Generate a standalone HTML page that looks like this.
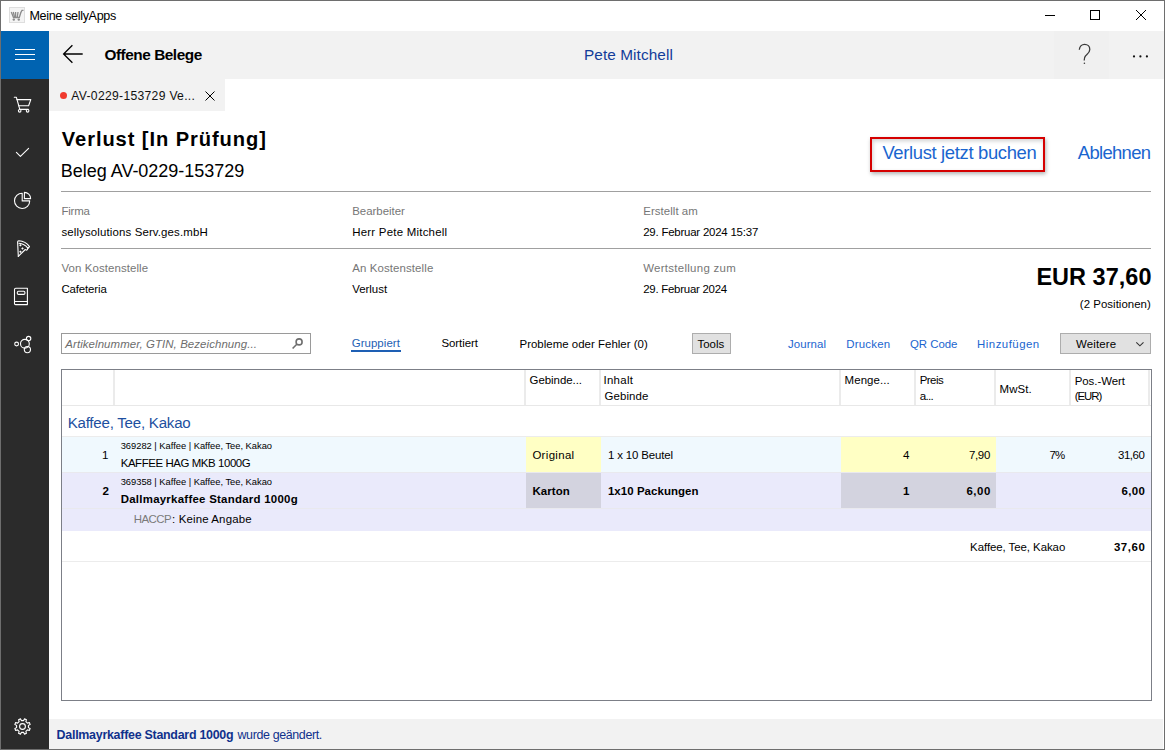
<!DOCTYPE html>
<html><head><meta charset="utf-8">
<style>
html,body{margin:0;padding:0;width:1165px;height:750px;overflow:hidden;background:#fff;}
body{position:relative;font-family:"Liberation Sans",sans-serif;color:#000;}
.t{position:absolute;line-height:1;white-space:nowrap;}
.r{position:absolute;}
svg{position:absolute;overflow:visible;}
</style></head><body>
<!-- window border -->
<div class="r" style="left:0;top:0;width:1165px;height:750px;box-sizing:border-box;border:1px solid #6e6e6e;"></div>
<!-- sidebar -->
<div class="r" style="left:1px;top:31px;width:48px;height:718px;background:#2b2b2b;"></div>
<div class="r" style="left:1px;top:31px;width:48px;height:48px;background:#0063b1;"></div>
<!-- header -->
<div class="r" style="left:49px;top:31px;width:1115px;height:48px;background:#f2f2f2;"></div>
<div class="r" style="left:1054px;top:31px;width:55px;height:48px;background:#f0f0f0;"></div>
<!-- tab -->
<div class="r" style="left:49px;top:79px;width:176px;height:32px;background:#f2f2f2;"></div>
<div class="r" style="left:60px;top:92px;width:7px;height:7px;border-radius:50%;background:#f03a2e;"></div>
<!-- status bar -->
<div class="r" style="left:49px;top:719px;width:1114px;height:30px;background:#f2f2f2;"></div>
<!-- hr -->
<div class="r" style="left:61px;top:191px;width:1090px;height:1px;background:#a0a0a0;"></div>
<div class="r" style="left:61px;top:248px;width:1090px;height:1px;background:#a0a0a0;"></div>
<!-- red box -->
<div class="r" style="left:870px;top:137px;width:175px;height:35px;box-sizing:border-box;border:2px solid #d50000;box-shadow:1px 2px 4px rgba(0,0,0,0.3), inset 1px 2px 4px rgba(0,0,0,0.18);"></div>
<!-- search box -->
<div class="r" style="left:61px;top:333px;width:250px;height:21px;box-sizing:border-box;border:1px solid #9a9a9a;"></div>
<!-- gruppiert underline -->
<div class="r" style="left:351px;top:350px;width:50px;height:2px;background:#1e5fb4;"></div>
<!-- Tools button -->
<div class="r" style="left:692px;top:333px;width:39px;height:21px;box-sizing:border-box;border:1px solid #adadad;background:#e1e1e1;"></div>
<!-- Weitere button -->
<div class="r" style="left:1060px;top:333px;width:91px;height:21px;box-sizing:border-box;border:1px solid #adadad;background:#e1e1e1;"></div>
<!-- table -->
<div class="r" style="left:61px;top:369px;width:1091px;height:332px;box-sizing:border-box;border:1px solid #7c7f87;"></div>
<!-- header seps -->
<div class="r" style="left:62px;top:405px;width:1089px;height:1px;background:#e8e8e8;"></div>
<div class="r" style="left:113px;top:370px;width:2px;height:35px;background:#ebebeb;"></div>
<div class="r" style="left:524px;top:370px;width:2px;height:35px;background:#ebebeb;"></div>
<div class="r" style="left:599px;top:370px;width:2px;height:35px;background:#ebebeb;"></div>
<div class="r" style="left:839px;top:370px;width:2px;height:35px;background:#ebebeb;"></div>
<div class="r" style="left:914px;top:370px;width:2px;height:35px;background:#ebebeb;"></div>
<div class="r" style="left:994px;top:370px;width:2px;height:35px;background:#ebebeb;"></div>
<div class="r" style="left:1069px;top:370px;width:2px;height:35px;background:#ebebeb;"></div>
<div class="r" style="left:1148px;top:370px;width:2px;height:35px;background:#ebebeb;"></div>
<!-- group row line -->
<div class="r" style="left:62px;top:436px;width:1089px;height:1px;background:#ececec;"></div>
<!-- row1 -->
<div class="r" style="left:62px;top:437px;width:1089px;height:35px;background:#f0f9fe;"></div>
<div class="r" style="left:526px;top:437px;width:75px;height:35px;background:#ffffc4;"></div>
<div class="r" style="left:841px;top:437px;width:155px;height:35px;background:#ffffc4;"></div>
<!-- row2 -->
<div class="r" style="left:62px;top:472px;width:1089px;height:59px;background:#eaeafb;"></div>
<div class="r" style="left:526px;top:472px;width:75px;height:36px;background:#d3d3df;"></div>
<div class="r" style="left:841px;top:472px;width:155px;height:36px;background:#d3d3df;"></div>
<div class="r" style="left:62px;top:472px;width:1089px;height:1px;background:#e9e9ee;"></div>
<div class="r" style="left:62px;top:508px;width:1089px;height:1px;background:#e9e9ee;"></div>
<!-- summary line -->
<div class="r" style="left:62px;top:561px;width:1089px;height:1px;background:#ececec;"></div>
<svg width="1165" height="750" viewBox="0 0 1165 750" style="left:0;top:0">
<!-- app icon -->
<rect x="9.5" y="7.5" width="15" height="15" fill="#f4f4f4" stroke="#dedede" stroke-width="1"/>
<g fill="none" stroke="#8a8a8a" stroke-width="1.3">
<path d="M11.3 12 L13.5 17.5 H19.3 L21 12"/>
<path d="M13.3 12 L14.5 17 M15.6 12 V17 M18 12 L17.3 17"/>
<path d="M21 12.3 L22 10.3 H23.5"/>
</g>
<g fill="#8a8a8a"><circle cx="13.8" cy="19.6" r="1.2"/><circle cx="18.8" cy="19.6" r="1.2"/></g>
<!-- window controls -->
<g stroke="#000" stroke-width="1" fill="none" shape-rendering="crispEdges">
<path d="M1045 15.5 H1055"/>
<rect x="1090.5" y="10.5" width="9" height="9"/>
</g>
<g stroke="#000" stroke-width="1" fill="none">
<path d="M1136 10 L1146 20 M1146 10 L1136 20"/>
</g>
<!-- hamburger -->
<g stroke="#fff" stroke-width="1.2" shape-rendering="crispEdges">
<path d="M15 49.5 H35 M15 54.5 H35 M15 59.5 H35"/>
</g>
<!-- back arrow -->
<g stroke="#000" stroke-width="1.3" fill="none">
<path d="M72.4 45.2 L63.6 54 L72.4 62.8 M63.8 54 H82.7"/>
</g>
<!-- tab close -->
<g stroke="#000" stroke-width="1" fill="none">
<path d="M205.5 91.5 L214.5 100.5 M214.5 91.5 L205.5 100.5"/>
</g>
<!-- help -->
<g stroke="#3a3a3a" stroke-width="1.3" fill="none">
<path d="M1079.3 49.8 C1079.6 46.4 1082 44.3 1084.6 44.3 C1087.6 44.3 1089.8 46.5 1089.8 49.4 C1089.8 52.7 1087.1 54.2 1085.6 55.8 C1084.4 57 1084.2 58.3 1084.2 60.6"/>
</g>
<circle cx="1084.4" cy="63.3" r="0.8" fill="#3a3a3a"/>
<g fill="#111"><circle cx="1134" cy="56.4" r="1.1"/><circle cx="1140.4" cy="56.4" r="1.1"/><circle cx="1146.9" cy="56.4" r="1.1"/></g>
<!-- sidebar icons -->
<g stroke="#ffffff" stroke-width="1.1" fill="none" stroke-linejoin="round" stroke-linecap="round">
<!-- cart -->
<path d="M14.3 97.3 H16.4 L19.8 109.4 H28.3"/>
<path d="M16.9 99.6 H30.8 L28.6 105.8 H18.6"/>
<circle cx="19.7" cy="110.8" r="1.3"/>
<circle cx="27.6" cy="110.8" r="1.3"/>
<!-- check -->
<path d="M16.4 152.4 L20.4 156.3 L28.6 148.3"/>
<!-- pie -->
<path d="M22.2 193.3 A7.6 7.6 0 1 0 29.7 200.9 H22.2 Z"/>
<path d="M24.4 192.4 V198.6 H30.6 A6.2 6.2 0 0 0 24.4 192.4 Z"/>
<!-- pizza -->
<path d="M18.3 256.3 L17.6 242 Q17.6 240.7 18.8 240.7 Q25.5 241 29.5 246.6 L28 248.3 Q24.3 243.7 19 243.3"/>
<path d="M18.3 256.3 L25.3 249.5 Q26.4 250.7 27.3 249.6 L27.8 248.4"/>
<!-- book -->
<path d="M15.8 288.3 H27.4 V304.6 H15.6 Q14.5 304.6 14.5 303.5 V289.6 Q14.5 288.3 15.8 288.3 Z"/>
<path d="M14.6 301.5 H27.4"/>
<rect x="17.3" y="291.3" width="7.6" height="3.1" rx="1.2"/>
<!-- share graph -->
<circle cx="16.6" cy="344" r="1.9"/>
<circle cx="24.9" cy="343.8" r="4.4"/>
<circle cx="28.6" cy="338.6" r="2.2"/>
<circle cx="27.4" cy="349.6" r="3.1"/>
<!-- gear -->
<path d="M23.61 720.60 L24.54 718.87 L26.46 719.66 L25.88 721.54 L27.46 723.12 L29.34 722.54 L30.13 724.46 L28.40 725.39 L28.40 727.61 L30.13 728.54 L29.34 730.46 L27.46 729.88 L25.88 731.46 L26.46 733.34 L24.54 734.13 L23.61 732.40 L21.39 732.40 L20.46 734.13 L18.54 733.34 L19.12 731.46 L17.54 729.88 L15.66 730.46 L14.87 728.54 L16.60 727.61 L16.60 725.39 L14.87 724.46 L15.66 722.54 L17.54 723.12 L19.12 721.54 L18.54 719.66 L20.46 718.87 L21.39 720.60 Z"/>
<circle cx="22.5" cy="726.5" r="2.9"/>
</g>
<g fill="#ffffff">
<rect x="19.5" y="244.4" width="1.8" height="1.8" transform="rotate(45 20.4 245.3)"/>
<rect x="21.6" y="247.5" width="1.8" height="1.8" transform="rotate(45 22.5 248.4)"/>
<rect x="19.5" y="250.8" width="1.8" height="1.8" transform="rotate(45 20.4 251.7)"/>
</g>
<!-- search icon -->
<g stroke="#6e6e6e" stroke-width="1.6" fill="none">
<circle cx="299.1" cy="341.9" r="3.0"/>
<path d="M296.8 344.3 L292.6 348.5"/>
</g>
<!-- chevron -->
<path d="M1136.3 342.3 L1139.9 345.8 L1143.5 342.3" stroke="#333" stroke-width="1.1" fill="none"/>
</svg>
<span class="t" style="top:10px;font-size:12.57px;letter-spacing:-0.328px;left:29.40px;">Meine sellyApps</span>
<span class="t" style="top:47px;font-size:15.36px;font-weight:bold;letter-spacing:-0.453px;left:104.40px;">Offene Belege</span>
<span class="t" style="top:47px;font-size:15.36px;color:#133c9a;letter-spacing:0.074px;left:584.00px;">Pete Mitchell</span>
<span class="t" style="top:90px;font-size:12.15px;color:#111;letter-spacing:0.299px;left:71.30px;">AV-0229-153729 Ve...</span>
<span class="t" style="top:129px;font-size:20.11px;font-weight:bold;letter-spacing:0.922px;left:61.80px;">Verlust [In Prüfung]</span>
<span class="t" style="top:162px;font-size:18.02px;letter-spacing:-0.024px;left:60.80px;">Beleg AV-0229-153729</span>
<span class="t" style="top:144px;font-size:18.44px;color:#1a65cf;letter-spacing:-0.345px;left:882.40px;">Verlust jetzt buchen</span>
<span class="t" style="top:144px;font-size:18.44px;color:#1a65cf;letter-spacing:-0.666px;left:1077.80px;">Ablehnen</span>
<span class="t" style="top:206px;font-size:11.45px;color:#767676;letter-spacing:-0.216px;left:61.50px;">Firma</span>
<span class="t" style="top:227px;font-size:11.45px;letter-spacing:0.129px;left:61.50px;">sellysolutions Serv.ges.mbH</span>
<span class="t" style="top:263px;font-size:11.45px;color:#767676;letter-spacing:0.09px;left:61.50px;">Von Kostenstelle</span>
<span class="t" style="top:284px;font-size:11.45px;letter-spacing:-0.144px;left:61.50px;">Cafeteria</span>
<span class="t" style="top:206px;font-size:11.45px;color:#767676;letter-spacing:-0.007px;left:352.20px;">Bearbeiter</span>
<span class="t" style="top:227px;font-size:11.45px;letter-spacing:0.238px;left:352.20px;">Herr Pete Mitchell</span>
<span class="t" style="top:263px;font-size:11.45px;color:#767676;letter-spacing:0.113px;left:352.20px;">An Kostenstelle</span>
<span class="t" style="top:284px;font-size:11.45px;letter-spacing:-0.015px;left:352.20px;">Verlust</span>
<span class="t" style="top:206px;font-size:11.45px;color:#767676;letter-spacing:0.061px;left:643.20px;">Erstellt am</span>
<span class="t" style="top:227px;font-size:11.45px;letter-spacing:-0.214px;left:643.20px;">29. Februar 2024 15:37</span>
<span class="t" style="top:263px;font-size:11.45px;color:#767676;letter-spacing:0.292px;left:643.20px;">Wertstellung zum</span>
<span class="t" style="top:284px;font-size:11.45px;letter-spacing:-0.252px;left:643.20px;">29. Februar 2024</span>
<span class="t" style="top:266px;font-size:23.46px;font-weight:bold;letter-spacing:0.04px;left:1036.40px;">EUR 37,60</span>
<span class="t" style="top:299px;font-size:11.45px;letter-spacing:0.034px;left:1079.80px;">(2 Positionen)</span>
<span class="t" style="top:339px;font-size:11.45px;font-style:italic;color:#6d6d6d;letter-spacing:0.082px;left:65.30px;">Artikelnummer, GTIN, Bezeichnung...</span>
<span class="t" style="top:338px;font-size:11.45px;color:#1e5fb4;letter-spacing:0.063px;left:351.70px;">Gruppiert</span>
<span class="t" style="top:338px;font-size:11.45px;letter-spacing:-0.055px;left:441.40px;">Sortiert</span>
<span class="t" style="top:339px;font-size:11.45px;letter-spacing:0.023px;left:519.50px;">Probleme oder Fehler (0)</span>
<span class="t" style="top:339px;font-size:11.45px;letter-spacing:0.055px;left:697.40px;">Tools</span>
<span class="t" style="top:339px;font-size:11.45px;color:#1a65cf;letter-spacing:0.088px;left:788.00px;">Journal</span>
<span class="t" style="top:339px;font-size:11.45px;color:#1a65cf;letter-spacing:0.195px;left:846.30px;">Drucken</span>
<span class="t" style="top:339px;font-size:11.45px;color:#1a65cf;letter-spacing:-0.053px;left:910.00px;">QR Code</span>
<span class="t" style="top:339px;font-size:11.45px;color:#1a65cf;letter-spacing:0.466px;left:977.10px;">Hinzufügen</span>
<span class="t" style="top:339px;font-size:11.45px;letter-spacing:0.16px;left:1076.00px;">Weitere</span>
<span class="t" style="top:375px;font-size:11.45px;letter-spacing:-0.044px;left:529.60px;">Gebinde...</span>
<span class="t" style="top:375px;font-size:11.45px;letter-spacing:0.28px;left:603.50px;">Inhalt</span>
<span class="t" style="top:391px;font-size:11.45px;letter-spacing:0.103px;left:604.50px;">Gebinde</span>
<span class="t" style="top:375px;font-size:11.45px;letter-spacing:0.082px;left:844.60px;">Menge...</span>
<span class="t" style="top:375px;font-size:11.45px;letter-spacing:-0.51px;left:919.70px;">Preis</span>
<span class="t" style="top:390px;font-size:11.6px;letter-spacing:-0.73px;left:919.70px;">a...</span>
<span class="t" style="top:384px;font-size:11.45px;letter-spacing:0.127px;left:999.50px;">MwSt.</span>
<span class="t" style="top:376px;font-size:11.45px;letter-spacing:-0.044px;left:1074.70px;">Pos.-Wert</span>
<span class="t" style="top:391px;font-size:11.45px;letter-spacing:-1.064px;left:1074.70px;">(EUR)</span>
<span class="t" style="top:415px;font-size:15.08px;color:#1d4fa0;letter-spacing:-0.227px;left:67.70px;">Kaffee, Tee, Kakao</span>
<span class="t" style="top:449px;font-size:11.6px;left:102.00px;">1</span>
<span class="t" style="top:442px;font-size:9.36px;letter-spacing:-0.016px;left:120.70px;">369282 | Kaffee | Kaffee, Tee, Kakao</span>
<span class="t" style="top:458px;font-size:11.45px;letter-spacing:-0.418px;left:120.70px;">KAFFEE HAG MKB 1000G</span>
<span class="t" style="top:450px;font-size:11.45px;letter-spacing:0.333px;left:532.40px;">Original</span>
<span class="t" style="top:450px;font-size:11.45px;letter-spacing:-0.144px;left:607.90px;">1 x 10 Beutel</span>
<span class="t" style="top:449px;font-size:11.6px;left:903.00px;">4</span>
<span class="t" style="top:450px;font-size:11.45px;letter-spacing:-0.333px;left:969.00px;">7,90</span>
<span class="t" style="top:450px;font-size:11.45px;letter-spacing:-0.761px;left:1049.50px;">7%</span>
<span class="t" style="top:450px;font-size:11.45px;letter-spacing:-0.465px;left:1118.00px;">31,60</span>
<span class="t" style="top:485px;font-size:11.6px;font-weight:bold;left:102.50px;">2</span>
<span class="t" style="top:478px;font-size:9.36px;letter-spacing:-0.016px;left:120.70px;">369358 | Kaffee | Kaffee, Tee, Kakao</span>
<span class="t" style="top:494px;font-size:11.45px;font-weight:bold;letter-spacing:0.259px;left:120.70px;">Dallmayrkaffee Standard 1000g</span>
<span class="t" style="top:486px;font-size:11.45px;font-weight:bold;letter-spacing:0.107px;left:532.40px;">Karton</span>
<span class="t" style="top:486px;font-size:11.45px;font-weight:bold;letter-spacing:0.073px;left:607.90px;">1x10 Packungen</span>
<span class="t" style="top:485px;font-size:11.6px;font-weight:bold;left:903.00px;">1</span>
<span class="t" style="top:486px;font-size:11.45px;font-weight:bold;letter-spacing:0.5px;left:966.50px;">6,00</span>
<span class="t" style="top:486px;font-size:11.45px;font-weight:bold;letter-spacing:0.3px;left:1121.60px;">6,00</span>
<span class="t" style="top:514px;font-size:11.45px;color:#7a7a7a;letter-spacing:-0.502px;left:133.70px;">HACCP</span>
<span class="t" style="top:514px;font-size:11.45px;letter-spacing:0.149px;left:172.00px;">: Keine Angabe</span>
<span class="t" style="top:542px;font-size:11.45px;letter-spacing:-0.064px;left:970.11px;">Kaffee, Tee, Kakao</span>
<span class="t" style="top:542px;font-size:11.45px;font-weight:bold;letter-spacing:0.56px;left:1113.90px;">37,60</span>
<span class="t" style="top:729px;font-size:12.43px;font-weight:bold;color:#10318c;letter-spacing:-0.263px;left:56.60px;">Dallmayrkaffee Standard 1000g</span>
<span class="t" style="top:729px;font-size:12.43px;color:#10318c;letter-spacing:-0.359px;left:237.50px;">wurde geändert.</span>
</body></html>
